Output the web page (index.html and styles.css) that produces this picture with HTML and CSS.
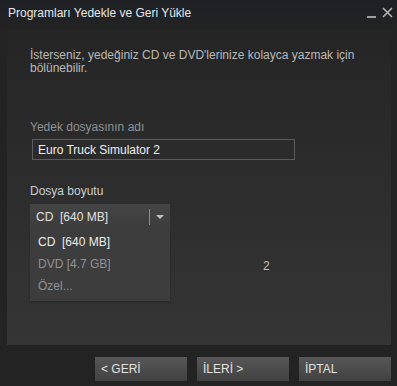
FILE: index.html
```html
<!DOCTYPE html>
<html lang="tr">
<head>
    <meta charset="UTF-8">
    <title>Programları Yedekle ve Geri Yükle</title>
    <link rel="stylesheet" href="styles.css">
</head>
<body>
    <div id="titlebar">
        <span class="title">Programları Yedekle ve Geri Yükle</span>
        <span class="winbtns">
            <span class="minimize"></span>
            <svg class="close" width="11" height="11" viewBox="0 0 11 11">
                <path d="M1 1L10 10M10 1L1 10" stroke="#b4b4b4" stroke-width="1.6"/>
            </svg>
        </span>
    </div>

    <div id="panel">
        <p class="intro">İsterseniz, yedeğiniz CD ve DVD'lerinize kolayca yazmak için bölünebilir.</p>

        <div class="label">Yedek dosyasının adı</div>
        <input type="text" class="namebox" value="Euro Truck Simulator 2">

        <div class="label bright">Dosya boyutu</div>
        <div class="combo">
            <div class="combo-head">
                <span>CD&nbsp; [640 MB]</span>
                <span class="combo-sep"></span>
                <span class="combo-arrow"></span>
            </div>
            <ul class="combo-list">
                <li class="sel">CD&nbsp; [640 MB]</li>
                <li>DVD [4.7 GB]</li>
                <li>Özel...</li>
            </ul>
        </div>
        <div class="count">2</div>
    </div>

    <div id="footer">
        <input type="button" value="< GERİ" class="btn">
        <input type="button" value="İLERİ >" class="btn">
        <input type="button" value="İPTAL" class="btn">
    </div>
</body>
</html>
```

FILE: styles.css
```css
html, body {
    margin: 0;
    height: 100%;
}

body {
    background-color: #232323;
    font-family: "Liberation Sans", Arial, sans-serif;
    font-size: 12px;
    overflow: hidden;
}

#titlebar {
    height: 30px;
    display: flex;
    align-items: center;
    justify-content: space-between;
    padding: 0 4px 0 8px;
    background: linear-gradient(#1e2025, #232323);
}

.title {
    color: #e6e8e9;
    font-size: 12px;
    margin-top: -4px;
}

.winbtns {
    display: flex;
    align-items: center;
    gap: 6px;
    margin-top: -6px;
}

.minimize {
    width: 9px;
    height: 2px;
    background-color: #a0a0a0;
    margin-top: 10px;
}

#panel {
    position: relative;
    height: 315px;
    margin: 0 6px 0 7px;
    padding: 0 0 0 23px;
    box-sizing: border-box;
    background: linear-gradient(#252525, #353535);
}

.intro {
    margin: 0;
    padding-top: 19px;
    width: 335px;
    color: #b9b9b9;
    line-height: 13px;
}

.label {
    margin-top: 45px;
    color: #8e9297;
    line-height: 14px;
}

.label.bright {
    margin-top: 24px;
    color: #c6ced5;
}

.namebox {
    display: block;
    margin: 5px 0 0 2px;
    width: 263px;
    height: 21px;
    box-sizing: border-box;
    border: 1px solid #5c5c5c;
    background-color: #2b2b2b;
    color: #f0f0f0;
    font-family: inherit;
    font-size: 12px;
    padding: 0 5px;
    outline: none;
}

.combo {
    position: relative;
    margin-top: 6px;
    width: 140px;
}

.combo-head {
    height: 25px;
    display: flex;
    align-items: center;
    padding-left: 6px;
    background: linear-gradient(#454545, #3c3c3c);
    color: #e0e0e0;
}

.combo-head span:first-child {
    flex: 1;
}

.combo-sep {
    width: 1px;
    height: 16px;
    background-color: #8a8a8a;
}

.combo-arrow {
    width: 0;
    height: 0;
    margin: 0 6px;
    border-left: 4px solid transparent;
    border-right: 4px solid transparent;
    border-top: 4px solid #c0c0c0;
}

.combo-list {
    position: absolute;
    top: 25px;
    left: 0;
    width: 140px;
    margin: 0;
    padding: 2px 0 4px;
    list-style: none;
    background-color: #3d3d3d;
    box-shadow: 0 1px 2px rgba(0,0,0,0.3);
}

.combo-list li {
    height: 22px;
    line-height: 22px;
    padding-left: 8px;
    color: #929292;
}

.combo-list li.sel {
    color: #ececec;
}

.count {
    margin: 30px 0 0 233px;
    color: #c2c2c2;
}

#footer {
    display: flex;
    justify-content: flex-end;
    gap: 10px;
    padding: 12px 6px 0 0;
}

.btn {
    width: 92px;
    height: 24px;
    border: none;
    background: linear-gradient(#575757, #414141);
    color: #e0e0e0;
    font-family: inherit;
    font-size: 12px;
    text-align: left;
    padding: 0 6px;
}
```
